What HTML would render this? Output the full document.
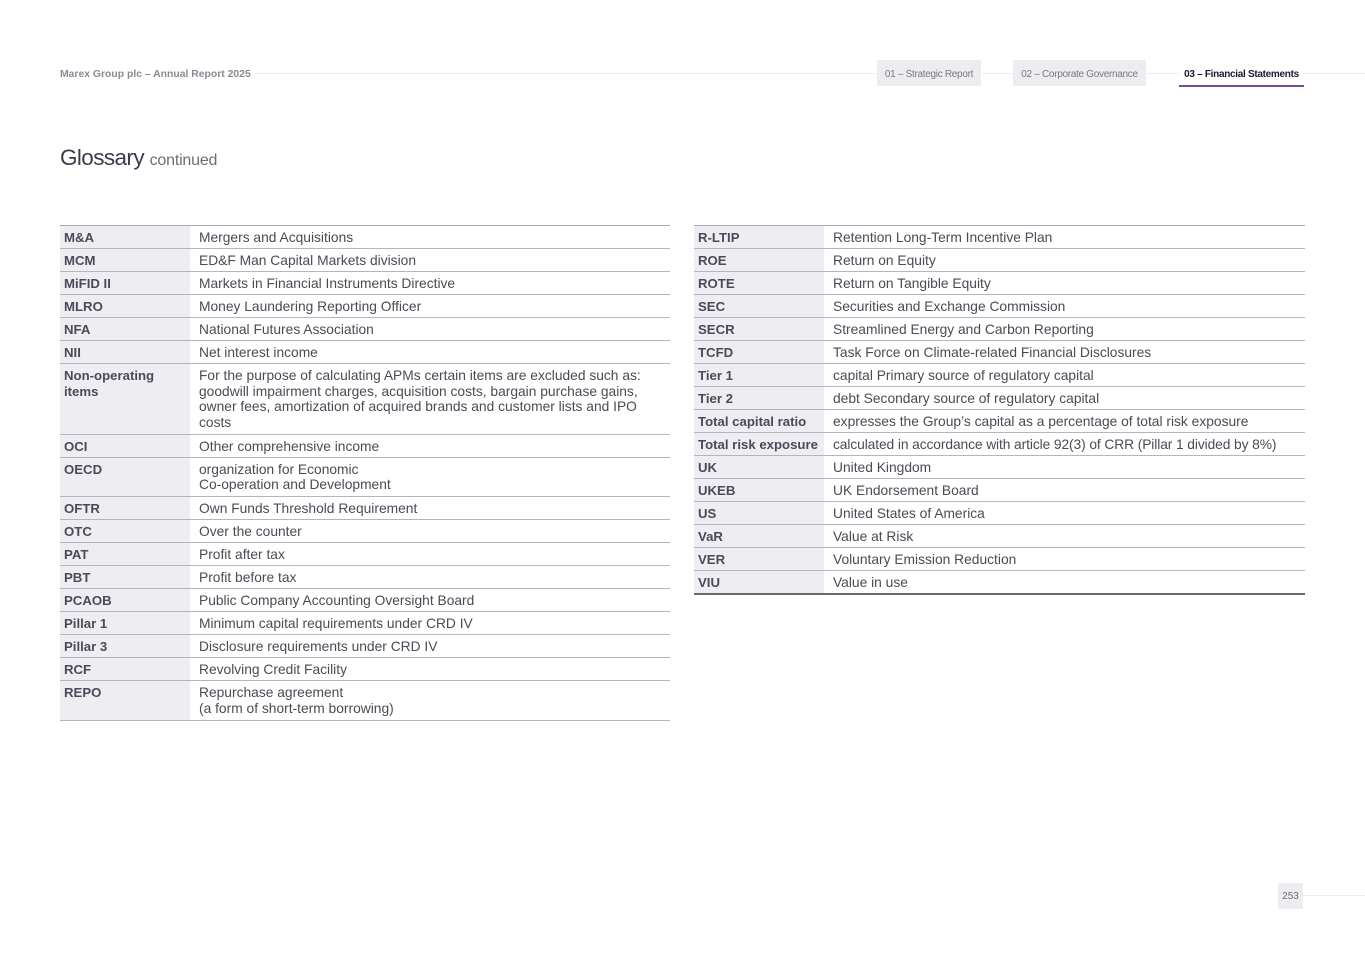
<!DOCTYPE html>
<html><head><meta charset="utf-8"><style>
body{margin:0;width:1365px;height:966px;background:#fff;font-family:"Liberation Sans",sans-serif;position:relative;overflow:hidden}
.hdr{position:absolute;left:60px;top:69px;font-size:10.4px;color:#8a8a95;font-weight:bold}
.hline{position:absolute;left:255px;right:0;top:73px;height:1px;background:#eeeef1}
.tab{position:absolute;top:60px;height:26px;line-height:29px;font-size:10px;letter-spacing:-0.3px;color:#777a85;background:#ececf1;text-align:center}
.tab.act{background:#fff;color:#1a1a33;font-weight:bold;border-bottom:2px solid #7a4a9a;height:25px}
h1{position:absolute;left:60px;top:145px;margin:0;font-weight:normal;font-size:22.5px;color:#3a3b48;letter-spacing:-0.6px}
h1 span{font-size:16px;color:#6b6c78;letter-spacing:-0.2px}
table{position:absolute;top:225px;border-collapse:collapse;font-size:13.8px;color:#4a4b55;border-top:1px solid #a9a9b0}
td{padding:4px 4px 2.5px;line-height:15.5px;border-bottom:1px solid #b5b5bb;vertical-align:top}
td.t{background:#ededf2;font-weight:bold;color:#4a4b58;width:122px;font-size:13.2px}
td.d{padding-left:9px}
tr.m td{padding-bottom:3.5px}
.pn{position:absolute;left:1278px;top:883px;width:25px;height:26px;background:#ececf1;font-size:10px;color:#6b6c78;text-align:center;line-height:27px}
.pl{position:absolute;left:1303px;right:0;top:895px;height:1px;background:#eeeef1}
</style></head><body>
<div class="hdr">Marex Group plc – Annual Report 2025</div>
<div class="hline"></div>
<div class="tab" style="left:877px;width:104px">01 – Strategic Report</div>
<div class="tab" style="left:1013px;width:133px">02 – Corporate Governance</div>
<div class="tab act" style="left:1179px;width:125px">03 – Financial Statements</div>
<h1>Glossary <span>continued</span></h1>
<table style="left:60px;width:610px">
<tr><td class="t">M&amp;A</td><td class="d">Mergers and Acquisitions</td></tr>
<tr><td class="t">MCM</td><td class="d">ED&amp;F Man Capital Markets division</td></tr>
<tr><td class="t">MiFID II</td><td class="d">Markets in Financial Instruments Directive</td></tr>
<tr><td class="t">MLRO</td><td class="d">Money Laundering Reporting Officer</td></tr>
<tr><td class="t">NFA</td><td class="d">National Futures Association</td></tr>
<tr><td class="t">NII</td><td class="d">Net interest income</td></tr>
<tr class="m"><td class="t">Non-operating items</td><td class="d">For the purpose of calculating APMs certain items are excluded such as:<br>goodwill impairment charges, acquisition costs, bargain purchase gains,<br>owner fees, amortization of acquired brands and customer lists and IPO<br>costs</td></tr>
<tr><td class="t">OCI</td><td class="d">Other comprehensive income</td></tr>
<tr class="m"><td class="t">OECD</td><td class="d">organization for Economic<br>Co-operation and Development</td></tr>
<tr><td class="t">OFTR</td><td class="d">Own Funds Threshold Requirement</td></tr>
<tr><td class="t">OTC</td><td class="d">Over the counter</td></tr>
<tr><td class="t">PAT</td><td class="d">Profit after tax</td></tr>
<tr><td class="t">PBT</td><td class="d">Profit before tax</td></tr>
<tr><td class="t">PCAOB</td><td class="d">Public Company Accounting Oversight Board</td></tr>
<tr><td class="t">Pillar 1</td><td class="d">Minimum capital requirements under CRD IV</td></tr>
<tr><td class="t">Pillar 3</td><td class="d">Disclosure requirements under CRD IV</td></tr>
<tr><td class="t">RCF</td><td class="d">Revolving Credit Facility</td></tr>
<tr class="m"><td class="t">REPO</td><td class="d">Repurchase agreement<br>(a form of short-term borrowing)</td></tr>
</table>
<table style="left:694px;width:611px;border-bottom:2px solid #6a6a72">
<tr><td class="t">R-LTIP</td><td class="d">Retention Long-Term Incentive Plan</td></tr>
<tr><td class="t">ROE</td><td class="d">Return on Equity</td></tr>
<tr><td class="t">ROTE</td><td class="d">Return on Tangible Equity</td></tr>
<tr><td class="t">SEC</td><td class="d">Securities and Exchange Commission</td></tr>
<tr><td class="t">SECR</td><td class="d">Streamlined Energy and Carbon Reporting</td></tr>
<tr><td class="t">TCFD</td><td class="d">Task Force on Climate-related Financial Disclosures</td></tr>
<tr><td class="t">Tier 1</td><td class="d">capital Primary source of regulatory capital</td></tr>
<tr><td class="t">Tier 2</td><td class="d">debt Secondary source of regulatory capital</td></tr>
<tr><td class="t">Total capital ratio</td><td class="d">expresses the Group’s capital as a percentage of total risk exposure</td></tr>
<tr><td class="t" style="white-space:nowrap">Total risk exposure</td><td class="d" style="white-space:nowrap;letter-spacing:-0.1px">calculated in accordance with article 92(3) of CRR (Pillar 1 divided by 8%)</td></tr>
<tr><td class="t">UK</td><td class="d">United Kingdom</td></tr>
<tr><td class="t">UKEB</td><td class="d">UK Endorsement Board</td></tr>
<tr><td class="t">US</td><td class="d">United States of America</td></tr>
<tr><td class="t">VaR</td><td class="d">Value at Risk</td></tr>
<tr><td class="t">VER</td><td class="d">Voluntary Emission Reduction</td></tr>
<tr><td class="t">VIU</td><td class="d">Value in use</td></tr>
</table>
<div class="pn">253</div><div class="pl"></div>
</body></html>
